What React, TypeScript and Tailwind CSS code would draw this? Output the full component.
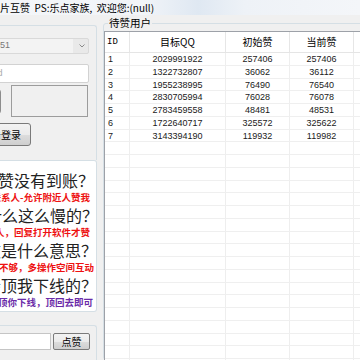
const rows = [
  ["1", "2029991922", "257406", "257406"],
  ["2", "1322732807", "36062", "36112"],
  ["3", "1955238995", "76490", "76540"],
  ["4", "2830705994", "76028", "76078"],
  ["5", "2783459558", "48481", "48531"],
  ["6", "1722640717", "325572", "325622"],
  ["7", "3143394190", "119932", "119982"],
];

const faq = [
  { text: "为什么赞没有到账？", kind: "q", pr: "pr-[2px]" },
  { text: "请设置QQ联系人-允许附近人赞我", kind: "red", pr: "pr-[6px]" },
  { text: "为什么这么慢的？", kind: "q", pr: "-mr-[2px]" },
  { text: "对方不在线人，回复打开软件才赞", kind: "red", pr: "pr-[6px]" },
  { text: "点赞失败是什么意思？", kind: "q", pr: "-mr-[1px]" },
  { text: "活跃度不够，多操作空间互动", kind: "red", pr: "pr-[2px]" },
  { text: "为什么会顶我下线的？", kind: "q", pr: "-mr-[1px]" },
  { text: "登录会顶你下线，顶回去即可", kind: "purple", pr: "pr-[3px]" },
];

function Row({ cells, header }: { cells: string[]; header?: boolean }) {
  const line = header ? "border-[#e6e6e6]" : "border-[#eeeeee]";
  return (
    <div
      className={
        header
          ? "flex h-[21px] border-b border-[#e5e5e5] text-[10px] leading-[20px] font-['Noto_Sans_CJK_SC',sans-serif]"
          : "flex h-[12.75px] border-b border-[#efefef] font-['Liberation_Sans',sans-serif] text-[9px] leading-[12px] text-[#1a1a1a]"
      }
    >
      <div
        className={`w-[25px] shrink-0 border-r ${line} ${header ? "pl-[2px] font-['Liberation_Mono',monospace] text-[9px]" : "pl-[3px]"}`}
      >
        {cells[0]}
      </div>
      <div className={`w-[96px] shrink-0 border-r text-center ${line}`}>{cells[1]}</div>
      <div className={`w-[64px] shrink-0 border-r text-center ${line}`}>{cells[2]}</div>
      <div className={`w-[64px] shrink-0 border-r text-center ${line}`}>{cells[3]}</div>
      <div className={`w-[60px] shrink-0 border-r ${line}`} />
    </div>
  );
}

export default function App() {
  const empty = Array.from({ length: 18 }, () => ["", "", "", ""]);

  return (
    <div className="w-[360px] h-[360px] overflow-hidden bg-[#f0f0f0] flex flex-col font-['Liberation_Sans','Noto_Sans_CJK_SC',sans-serif] text-black">
      {/* title bar */}
      <div className="h-[15px] shrink-0 flex items-center overflow-hidden bg-[linear-gradient(90deg,#f4f6f9_0%,#f1f4f8_40%,#dfe8f2_55%,#eef2f7_68%,#f4f6f9_100%)]">
        <span className="whitespace-nowrap text-[10px] leading-[14px] font-['Noto_Sans_CJK_SC',sans-serif]">
          片互赞&nbsp;&nbsp;PS:乐点家族,&nbsp;&nbsp;欢迎您:(null)
        </span>
      </div>

      <div className="flex flex-1 min-h-0">
        {/* left column */}
        <div className="w-[97px] shrink-0 flex flex-col overflow-hidden">
          {/* login group */}
          <div className="mt-[10px] h-[135px] border-t border-r border-[#d5dfe5] rounded-tr-[3px] pt-[12px] flex flex-col">
            <div className="flex justify-end pr-[7px]">
              <div className="w-[130px] h-[16px] shrink-0 flex items-center border border-[#d9d9d9] rounded-[2px] bg-[#e9e9e9]">
                <div className="h-full w-[113px] bg-[#f3f3f3] flex items-center text-[9px] text-[#777]">
                  1097654351
                </div>
                <svg width="6" height="4" viewBox="0 0 6 4" className="ml-[6px]">
                  <path d="M0.5 0.5 L3 3 L5.5 0.5" fill="none" stroke="#8a8a8a" strokeWidth="1" />
                </svg>
              </div>
            </div>
            <div className="flex justify-end pr-[7px] mt-[10px]">
              <div className="w-[130px] h-[19px] shrink-0 flex items-center border border-[#d2d2d2] rounded-[2px] bg-white pl-[4px] text-[9px] text-[#aaa]">
                password
              </div>
            </div>
            <div className="flex justify-end items-center pr-[8px] mt-[2px] h-[32px]">
              <div className="w-[40px] h-[25px] shrink-0 border border-[#8d8d8d] rounded-[3px] bg-[linear-gradient(#f2f2f2,#dcdcdc)]" />
              <div className="w-[77px] h-[32px] shrink-0 ml-[10px] border border-[#9c9c9c] bg-[#f0f0f0]" />
            </div>
            <div className="flex justify-end pr-[65px] mt-[6px]">
              <div className="w-[60px] h-[23px] shrink-0 flex items-center justify-center border border-[#7a7a7a] rounded-[3px] bg-[linear-gradient(#f3f3f3_0%,#ebebeb_50%,#dddddd_51%,#cfcfcf_100%)] text-[10px] font-['Noto_Sans_CJK_SC',sans-serif]">
                点击登录
              </div>
            </div>
          </div>

          {/* help text */}
          <div className="h-[152px] shrink-0 bg-white border border-[#d5dfe5] border-l-0 rounded-r-[3px] pt-[10px] flex flex-col overflow-hidden font-['Noto_Sans_CJK_SC',sans-serif]">
            {faq.map((f) => (
              <div
                key={f.text}
                className={`flex justify-end whitespace-nowrap ${f.pr} ${
                  f.kind === "q"
                    ? "h-[18px] text-[16px] leading-[18px] text-[#222]"
                    : f.kind === "red"
                      ? "h-[17px] text-[9.5px] leading-[17px] font-bold text-[#ee1111]"
                      : "h-[17px] text-[9.5px] leading-[17px] font-bold text-[#6a2aa8]"
                }`}
              >
                <span className="shrink-0">{f.text}</span>
              </div>
            ))}
          </div>

          {/* like group */}
          <div className="mt-[13px] flex-1 border-t border-r border-[#d5dfe5] rounded-tr-[3px] pt-[7px]">
            <div className="flex justify-end items-center pr-[6px]">
              <div className="w-[100px] h-[17px] shrink-0 border border-[#c5c5c5] bg-white" />
              <div className="w-[37px] h-[17px] shrink-0 ml-[2px] flex items-center justify-center border border-[#7a7a7a] rounded-[2px] bg-[linear-gradient(#f3f3f3_0%,#ebebeb_50%,#dddddd_51%,#cfcfcf_100%)] text-[10px] font-['Noto_Sans_CJK_SC',sans-serif]">
                点赞
              </div>
            </div>
          </div>
        </div>

        {/* right group */}
        <fieldset className="ml-[6px] mt-[1px] w-[300px] shrink-0 border border-[#d5dfe5] rounded-[3px] p-0 min-w-0">
          <legend className="ml-[4px] px-[1px] text-[10.5px] leading-[14px] font-['Noto_Sans_CJK_SC',sans-serif]">
            待赞用户
          </legend>
          <div className="mt-[1px] h-[340px] overflow-hidden bg-white border-t border-l border-[#9da1a8]">
            <Row header cells={["ID", "目标QQ", "初始赞", "当前赞"]} />
            {rows.map((r) => (
              <Row key={r[0]} cells={r} />
            ))}
            {empty.map((r, i) => (
              <Row key={"e" + i} cells={r} />
            ))}
          </div>
        </fieldset>
      </div>
    </div>
  );
}
